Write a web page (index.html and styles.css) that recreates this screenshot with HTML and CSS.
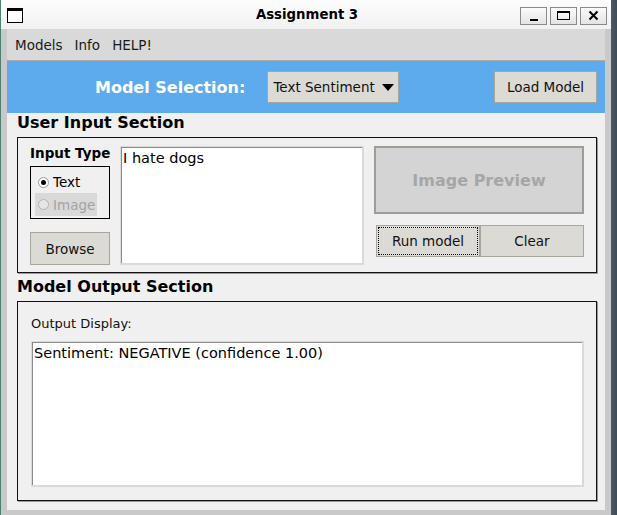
FILE: index.html
```html
<!DOCTYPE html>
<html>
<head>
<meta charset="utf-8">
<title>Assignment 3</title>
<link rel="stylesheet" href="styles.css">
</head>
<body>
<div class="window">
  <div class="titlebar">
    <span class="win-icon"></span>
    <span class="title">Assignment 3</span>
    <div class="win-buttons">
      <span class="wbtn"><svg width="25" height="16" viewBox="0 0 25 16"><rect x="9" y="11" width="8" height="2" fill="#000"/></svg></span>
      <span class="wbtn"><svg width="25" height="16" viewBox="0 0 25 16"><rect x="6.5" y="3.5" width="12" height="8" fill="none" stroke="#000" stroke-width="1"/><rect x="6" y="3" width="13" height="2" fill="#000"/></svg></span>
      <span class="wbtn"><svg width="25" height="16" viewBox="0 0 25 16"><path d="M8.5 3.5 L16.5 11.5 M16.5 3.5 L8.5 11.5" stroke="#000" stroke-width="2" fill="none"/></svg></span>
    </div>
  </div>
  <div class="client">
    <div class="menubar">
      <span class="menu-item">Models</span>
      <span class="menu-item">Info</span>
      <span class="menu-item">HELP!</span>
    </div>
    <div class="selbar">
      <span class="sel-label">Model Selection:</span>
      <span class="dropdown">Text Sentiment<span class="caret"></span></span>
      <span class="btn load-btn">Load Model</span>
    </div>
    <div class="content">
      <div class="section-title">User Input Section</div>
      <div class="frame input-frame">
        <div class="col-type">
          <div class="type-label">Input Type</div>
          <div class="radio-box">
            <div class="radio-row"><span class="radio checked"></span><span>Text</span></div>
            <div class="radio-row disabled"><span class="radio"></span><span>Image</span></div>
          </div>
          <span class="btn browse-btn">Browse</span>
        </div>
        <div class="textbox input-text">I hate dogs</div>
        <div class="col-preview">
          <div class="preview">Image Preview</div>
          <div class="btn-row">
            <span class="btn run-btn">Run model</span>
            <span class="btn clear-btn">Clear</span>
          </div>
        </div>
      </div>
      <div class="section-title second">Model Output Section</div>
      <div class="frame output-frame">
        <div class="out-label">Output Display:</div>
        <div class="textbox output-text">Sentiment: NEGATIVE (confidence 1.00)</div>
      </div>
    </div>
  </div>
</div>
</body>
</html>
```

FILE: styles.css
```css
html, body {
  margin: 0;
  padding: 0;
}
body {
  width: 617px;
  height: 515px;
  overflow: hidden;
  background: linear-gradient(to right, #4f7f70 0px, #4f7f70 1px, #4a5a68 611px, #3f4b58 617px);
  font-family: "DejaVu Sans", sans-serif;
  font-size: 13px;
  color: #111;
}
.window {
  margin-left: 1px;
  width: 610px;
  height: 515px;
  background: #c9c9c9;
  display: flex;
  flex-direction: column;
}
.titlebar {
  height: 29px;
  flex: none;
  box-sizing: border-box;
  background: linear-gradient(#fdfdfd, #f1f1f1);
  display: grid;
  grid-template-columns: 1fr auto 1fr;
  align-items: center;
  padding: 0 4px 0 6px;
}
.win-icon {
  width: 14px;
  height: 11px;
  border: 1px solid #000;
  border-top-width: 3px;
  background: #fff;
  margin-top: 2px;
}
.title {
  text-align: center;
  font-weight: bold;
  font-size: 13.3px;
  color: #000;
}
.win-buttons {
  justify-self: end;
  display: flex;
  gap: 3px;
  margin-top: 2px;
}
.wbtn {
  width: 25px;
  height: 16px;
  border: 1px solid #8a8a8a;
  background: linear-gradient(#fbfbfb, #e4e4e4);
  display: block;
}
.wbtn svg {
  display: block;
}
.client {
  margin: 0 6px;
  flex: none;
  height: 481px;
  display: flex;
  flex-direction: column;
}
.menubar {
  height: 31px;
  background: #d9d9d9;
  border-bottom: 1px solid #a9a9a9;
  display: flex;
  align-items: center;
  padding-left: 2px;
  font-size: 13.5px;
  color: #1a1a1a;
}
.menu-item {
  padding: 0 6px;
}
.selbar {
  height: 52px;
  background: #5dabec;
  display: flex;
  align-items: center;
  padding: 0 8px 0 88px;
}
.sel-label {
  color: #fff;
  font-weight: bold;
  font-size: 16px;
}
.btn {
  box-sizing: border-box;
  background: #dcdad5;
  border: 1px solid #a9a59d;
  display: flex;
  align-items: center;
  justify-content: center;
  font-size: 13.5px;
  color: #111;
}
.dropdown {
  box-sizing: border-box;
  margin-left: 22px;
  width: 132px;
  height: 32px;
  background: #dcdad5;
  border: 1px solid #a9a59d;
  display: flex;
  align-items: center;
  padding-left: 5px;
  font-size: 13.5px;
  color: #111;
}
.caret {
  width: 0;
  height: 0;
  border-left: 6px solid transparent;
  border-right: 6px solid transparent;
  border-top: 7px solid #000;
  margin-left: 7px;
}
.load-btn {
  margin-left: auto;
  width: 103px;
  height: 32px;
}
.content {
  flex: 1;
  background: #f0f0f0;
  padding: 0 8px 0 10px;
}
.section-title {
  font-weight: bold;
  font-size: 16px;
  line-height: 20px;
  color: #000;
  margin-bottom: 4px;
}
.section-title.second {
  margin-top: 4px;
}
.frame {
  box-sizing: border-box;
  border: 1px solid #111;
  box-shadow: 1px 1px 0 #9a9a9a;
}
.input-frame {
  height: 136px;
  padding: 8px 12px 0 12px;
  display: grid;
  grid-template-columns: 80px 244px 210px;
  column-gap: 10px;
  align-items: start;
}
.col-type {
  display: flex;
  flex-direction: column;
}
.type-label {
  font-weight: bold;
  font-size: 13.5px;
  line-height: 16px;
  margin-top: -1px;
  color: #000;
  white-space: nowrap;
}
.radio-box {
  box-sizing: border-box;
  margin-top: 5px;
  height: 53px;
  border: 1px solid #000;
  padding: 4px 0 0 4px;
}
.radio-row {
  height: 22px;
  display: flex;
  align-items: center;
  padding-left: 3px;
  width: 62px;
  box-sizing: border-box;
  font-size: 13.5px;
  color: #000;
}
.radio-row.disabled {
  height: 23px;
  background: #d9d9d9;
  color: #a3a3a3;
}
.radio {
  box-sizing: border-box;
  width: 11px;
  height: 11px;
  border-radius: 50%;
  border: 1px solid #9a9a9a;
  background: #fff;
  margin-right: 4px;
  display: flex;
  align-items: center;
  justify-content: center;
}
.radio.checked::after {
  content: "";
  width: 5px;
  height: 5px;
  border-radius: 50%;
  background: #000;
}
.disabled .radio {
  border-color: #b5b5b5;
  background: #e6e6e6;
}
.browse-btn {
  margin-top: 13px;
  height: 33px;
}
.textbox {
  box-sizing: border-box;
  background: #fff;
  border: 1px solid #dadada;
  border-right-width: 2px;
  border-bottom-width: 2px;
  box-shadow: inset 1px 1px 0 #8c8c8c;
  font-size: 14.5px;
  line-height: 18px;
  color: #000;
}
.input-text {
  height: 119px;
  padding: 2px 2px;
}
.col-preview {
  display: flex;
  flex-direction: column;
}
.preview {
  box-sizing: border-box;
  height: 68px;
  background: #d4d4d4;
  border: 2px solid #a19d96;
  display: flex;
  align-items: center;
  justify-content: center;
  font-weight: bold;
  font-size: 16px;
  color: #a6a6a6;
}
.btn-row {
  margin-top: 11px;
  display: flex;
  padding-left: 2px;
}
.run-btn {
  width: 104px;
  height: 32px;
  outline: 1px dotted #000;
  outline-offset: -3px;
}
.clear-btn {
  width: 104px;
  height: 32px;
}
.output-frame {
  height: 200px;
  padding: 14px 12px 12px 13px;
}
.out-label {
  font-size: 13px;
  line-height: 16px;
  color: #111;
}
.output-text {
  margin-top: 9px;
  height: 146px;
  padding: 2px 2px;
}
```
